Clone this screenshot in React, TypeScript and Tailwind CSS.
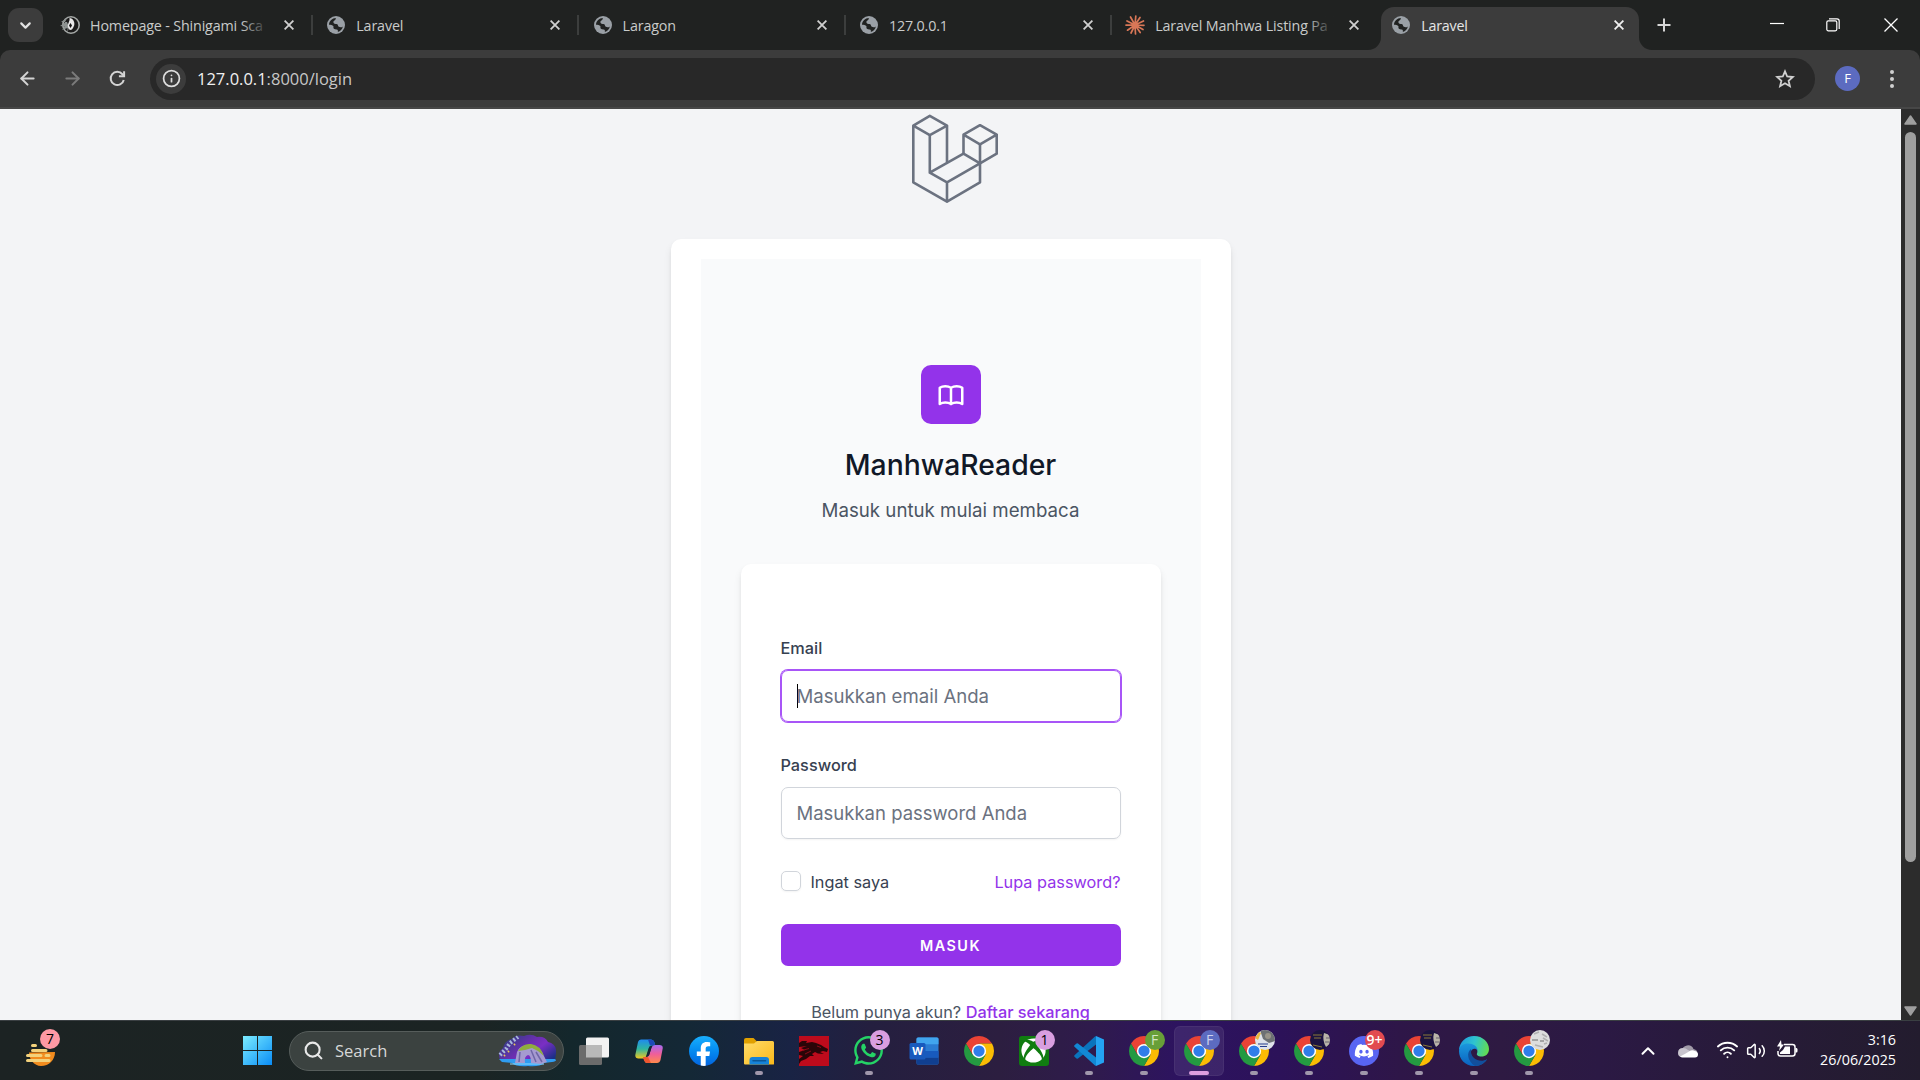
import type { ReactNode } from "react";
import { FaWhatsapp, FaXbox, FaDiscord, FaFacebookF } from "react-icons/fa";
import { ArrowLeft, ArrowRight, Info, Search, Volume2, Wifi, ChevronUp, ChevronDown } from "lucide-react";

const globe = (
  <svg viewBox="0 0 20 20" className="size-[18px] shrink-0">
    <circle cx="10" cy="10" r="10" fill="#9aa0a6" />
    <path d="M9.8 2.2 C9.8 4 9 4.7 7.9 5.3 C6.8 5.9 6.9 7.4 7.8 8.3 C8.6 9.1 10.4 8.4 11.4 9.2 C12.4 10 12 11.3 13.2 12 C14.6 12.8 16.3 12.7 17.6 11.6 C17 14.6 14.8 16.9 12 17.7 C12.3 16.5 12.2 15.6 11.2 15.1 C9.9 14.6 8.2 15 7.4 13.8 C6.8 12.8 7.5 11.9 7 11 C6.2 9.8 4 9.9 2.2 9.6 C2.5 5.5 5.8 2.3 9.8 2.2Z" fill="#202221" />
  </svg>
);

const shinigami = (
  <svg viewBox="0 0 20 20" className="size-[20px] shrink-0">
    <circle cx="11" cy="10" r="8.2" fill="#1b1b1b" stroke="#a5a9a7" strokeWidth="1.6" />
    <path d="M1 7L7 3L4.500 8L0 11L4.500 11.500L2 15L7.500 13L7.500 18L9 12L7 7Z" fill="#8d9391" />
    <path d="M9.500 3C13 3 16 8 13.500 12C12 16 9 16 8 12C7 9 10 7 9.500 3Z" fill="#e8e8e8" />
    <path d="M10.500 8L12 10.500L10.500 13L9 10.500Z" fill="#111" />
  </svg>
);

const spark = (
  <svg viewBox="-10 -10 20 20" className="size-[20px] shrink-0" stroke="#d97757" strokeWidth="1.7" strokeLinecap="round">
    <path d="M0 0L0.800 -9M0 0L5 -7.500M0 0L8.500 -4M0 0L9 0.300M0 0L8 4.500M0 0L5.200 7.600M0 0L0.500 9M0 0L-4 8M0 0L-7.500 5.200M0 0L-9 0.200M0 0L-8 -4M0 0L-4.500 -8" />
  </svg>
);

function Close({ active = false }: { active?: boolean }) {
  return (
    <svg viewBox="0 0 10 10" className="size-[10px] shrink-0" stroke={active ? "#f1f1f1" : "#d0d0d0"} strokeWidth="1.8">
      <path d="M0.600 0.600L9.400 9.400M9.400 0.600L0.600 9.400" />
    </svg>
  );
}

function TabTitle({ title, fade = false }: { title: string; fade?: boolean }) {
  return (
    <div className="relative mt-px ml-[10px] w-[179px] text-[14.3px] tracking-[-0.15px] whitespace-nowrap text-[#c9cbca]">
      {title}
      {fade && <div className="absolute inset-y-0 right-0 w-[28px] bg-linear-to-r from-transparent to-[#202221]" />}
    </div>
  );
}

function Tab({ icon, title, fade = false }: { icon: ReactNode; title: string; fade?: boolean }) {
  return (
    <div className="flex h-full w-[266.3px] shrink-0 items-center">
      <div className="flex w-[20px] justify-center">{icon}</div>
      <TabTitle title={title} fade={fade} />
      <div className="ml-[15px] flex"><Close /></div>
      <div className="ml-[17px] h-[20px] w-[2px] bg-[#3c3e3d]" />
    </div>
  );
}

function TabStrip() {
  return (
    <div className="flex h-[50px] items-center bg-[#202221]">
      <div className="ml-[8px] flex h-[34px] w-[35px] items-center justify-center rounded-[11px] bg-[#3c3c3c]">
        <ChevronDown className="size-[17px] text-[#e3e3e3]" strokeWidth={3} />
      </div>
      <div className="ml-[17px] flex h-full">
        <Tab icon={shinigami} title="Homepage - Shinigami Sca" fade />
        <Tab icon={globe} title="Laravel" />
        <Tab icon={globe} title="Laragon" />
        <Tab icon={globe} title="127.0.0.1" />
        <div className="flex h-full w-[254px] shrink-0 items-center">
          <div className="flex w-[20px] justify-center">{spark}</div>
          <TabTitle title="Laravel Manhwa Listing Pa" fade />
          <div className="ml-[15px] flex"><Close /></div>
        </div>
      </div>
      <div className="relative ml-[2px] mt-[7px] flex h-[43px] w-[258px] items-center rounded-t-[13px] bg-[#3c3c3c]">
        <svg viewBox="0 0 13 13" className="absolute bottom-0 -left-[13px] size-[13px]"><path d="M13 0V13H0A13 13 0 0 0 13 0Z" fill="#3c3c3c" /></svg>
        <svg viewBox="0 0 13 13" className="absolute bottom-0 -right-[13px] size-[13px]"><path d="M0 0V13H13A13 13 0 0 1 0 0Z" fill="#3c3c3c" /></svg>
        <div className="mb-[7px] ml-[11px] flex">{globe}</div>
        <div className="mb-[6px] ml-[11px] w-[193px] text-[14.3px] tracking-[-0.2px] text-[#e6e6e6]">Laravel</div>
        <div className="mb-[7px] flex"><Close active /></div>
      </div>
      <svg viewBox="0 0 14 14" className="ml-[18px] size-[14px]" stroke="#d6d6d6" strokeWidth="2"><path d="M7 0.500V13.500M0.500 7H13.500" /></svg>
      <svg viewBox="0 0 14 14" className="ml-[99px] size-[14px]" stroke="#fff" strokeWidth="1.2"><path d="M0 5.500H14" /></svg>
      <svg viewBox="0 0 14 14" className="ml-[42px] size-[14px]" stroke="#fff" strokeWidth="1.2" fill="none">
        <rect x="0.800" y="2.800" width="10" height="10" rx="1.500" />
        <path d="M3 0.800H11Q13.200 0.800 13.200 3V11" />
      </svg>
      <svg viewBox="0 0 14 14" className="ml-[44px] size-[14px]" stroke="#fff" strokeWidth="1.3"><path d="M0.500 0.500L13.500 13.500M13.500 0.500L0.500 13.500" /></svg>
    </div>
  );
}

function Toolbar() {
  return (
    <div className="bg-[#202221]">
      <div className="flex h-[59px] items-center rounded-t-[10px] border-b-2 border-[#474747] bg-[#3c3c3c]">
        <ArrowLeft className="ml-[17px] size-[21px] text-[#d4d4d4]" strokeWidth={2.3} />
        <ArrowRight className="ml-[24px] size-[21px] text-[#7b7b7b]" strokeWidth={2.3} />
        <svg viewBox="0 0 18 18" className="ml-[26px] size-[17px]" fill="none" stroke="#d4d4d4" strokeWidth="2.1">
          <path d="M15.600 10.500A7 7 0 1 1 14.200 4.500L15.800 6.200" />
          <path d="M16 1.200V6.700H10.500" />
        </svg>
        <div className="ml-[24px] flex h-[42px] w-[1665px] items-center rounded-full bg-[#282828]">
          <div className="ml-[6px] flex size-[30px] items-center justify-center rounded-full bg-[#3c3c3c]">
            <Info className="size-[19px] text-[#dedede]" strokeWidth={2.2} />
          </div>
          <div className="mt-[2px] ml-[11px] text-[16.5px] text-[#c7c7c7]"><span className="text-[#f0f0f0]">127.0.0.1</span>:8000/login</div>
          <svg viewBox="0 0 20 20" className="mr-[20px] ml-auto size-[20px]" fill="none" stroke="#d0d0d0" strokeWidth="1.8">
            <path d="M10 2.300L12.200 7.500L17.800 8L13.600 11.700L14.900 17.200L10 14.300L5.100 17.200L6.400 11.700L2.200 8L7.800 7.500Z" />
          </svg>
        </div>
        <div className="ml-[20px] flex size-[25px] items-center justify-center rounded-full bg-[#5c6bc0] text-[13px] text-white">F</div>
        <div className="ml-[30px] flex flex-col gap-[3px]">
          <div className="size-[4px] rounded-full bg-[#d0d0d0]" />
          <div className="size-[4px] rounded-full bg-[#d0d0d0]" />
          <div className="size-[4px] rounded-full bg-[#d0d0d0]" />
        </div>
      </div>
    </div>
  );
}

function LoginPage() {
  return (
    <div className="flex h-full flex-1 flex-col items-center overflow-hidden bg-[#f3f4f6] font-['Inter',sans-serif]">
      <svg viewBox="901 109 100 100" className="size-[100px] shrink-0" fill="none" stroke="#6b7280" strokeWidth="2.6" strokeLinejoin="round">
        <path d="M929.800 115.900L947 125.700L929.800 135.200L913.300 125.700Z" />
        <path d="M913.300 125.700V182.300L947 201.700L980 182.300V144.300" />
        <path d="M929.800 135.200V172.700L947 182.300V201.700M947 125.700V162.700M929.800 172.700L963.500 153.700L980 163.300L947 182.300" />
        <path d="M980 125.200L996.700 134.700L980 144.300L963.500 134.700ZM963.500 134.700V153.700M996.700 134.700V153.700L980 163.300" />
      </svg>
      <div className="mt-[30px] w-[560px] shrink-0 rounded-[10px] bg-white px-[30px] pt-[20px] shadow-[0_5px_8px_-1px_rgba(0,0,0,0.1),0_2px_5px_-2px_rgba(0,0,0,0.1)]">
        <div className="flex h-[900px] flex-col items-center bg-[#f9fafb] px-[40px] pt-[106px]">
          <div className="flex size-[60px] items-center justify-center rounded-[10px] bg-[#9333ea]">
            <svg viewBox="0 0 24 24" className="size-[30px]" fill="none" stroke="#fff" strokeWidth="2" strokeLinecap="round" strokeLinejoin="round">
              <path d="M12 6.253v13m0-13C10.832 5.477 9.246 5 7.500 5S4.168 5.477 3 6.253v13C4.168 18.477 5.754 18 7.500 18s3.332.477 4.500 1.253m0-13C13.168 5.477 14.754 5 16.500 5c1.747 0 3.332.477 4.500 1.253v13C19.832 18.477 18.247 18 16.500 18c-1.746 0-3.332.477-4.500 1.253" />
            </svg>
          </div>
          <h1 className="mt-[21px] text-[28.3px] leading-[40px] font-medium text-[#111827]">ManhwaReader</h1>
          <p className="mt-[11px] text-[18.700px] leading-[30px] text-[#4b5563]">Masuk untuk mulai membaca</p>
          <div className="mt-[38px] h-[600px] w-[420px] rounded-[10px] bg-white px-[40px] pt-[72px] shadow-[0_5px_8px_-1px_rgba(0,0,0,0.1),0_2px_5px_-2px_rgba(0,0,0,0.1)]">
            <div className="text-[16.3px] leading-[25px] font-medium text-[#374151]">Email</div>
            <div className="mt-[9px] flex h-[52px] items-center rounded-[7px] border border-[#a855f7] px-[15px] text-[18.600px] text-[#6b7280] ring-1 ring-[#a855f7]">
              <div className="h-[24px] w-px bg-black" />
              <span className="mt-[2px] -ml-px">Masukkan email Anda</span>
            </div>
            <div className="mt-[31px] text-[16.3px] leading-[25px] font-medium text-[#374151]">Password</div>
            <div className="mt-[9px] flex h-[52px] items-center rounded-[7px] border border-[#d1d5db] px-[15px] text-[18.500px] text-[#6b7280] shadow-xs">
              <span className="mt-px">Masukkan password Anda</span>
            </div>
            <div className="mt-[30px] flex h-[25px] items-center text-[16.300px]">
              <div className="mb-[2px] size-[20px] rounded-[5px] border border-[#d1d5db] shadow-xs" />
              <span className="mt-px ml-[10px] text-[#374151]">Ingat saya</span>
              <span className="mt-px ml-auto text-[#9333ea]">Lupa password?</span>
            </div>
            <div className="mt-[30px] flex h-[42px] items-center justify-center rounded-[7px] bg-[#9333ea] text-[14.400px] font-semibold tracking-[1.500px] text-white">MASUK</div>
            <div className="mt-[34px] text-center text-[16.300px] leading-[25px] text-[#4b5563]">
              Belum punya akun? <span className="font-medium text-[#9333ea]">Daftar sekarang</span>
            </div>
          </div>
        </div>
      </div>
    </div>
  );
}

function ScrollBar() {
  return (
    <div className="flex w-[19px] flex-col items-center bg-[#2c2c2c]">
      <svg viewBox="0 0 13 10" className="mt-[6px] h-[10px] w-[13px]"><path d="M6.500 1L12 9H1Z" fill="#9f9f9f" stroke="#9f9f9f" strokeLinejoin="round" strokeWidth="1.5" /></svg>
      <div className="mt-[7px] h-[730px] w-[11px] rounded-full bg-[#9f9f9f]" />
      <svg viewBox="0 0 13 10" className="mt-auto mb-[4px] h-[10px] w-[13px]"><path d="M6.500 9L12 1H1Z" fill="#9f9f9f" stroke="#9f9f9f" strokeLinejoin="round" strokeWidth="1.500" /></svg>
    </div>
  );
}

const chrome = (
  <svg viewBox="0 0 24 24" className="size-[30px]">
    <path d="M1.608 6A12 12 0 0 1 22.392 6H12L6.804 15Z" fill="#ea4335" />
    <path d="M22.392 6A12 12 0 0 1 12 24L17.196 15L12 6Z" fill="#fbbc04" />
    <path d="M12 24A12 12 0 0 1 1.608 6L6.804 15H17.196Z" fill="#249a41" />
    <circle cx="12" cy="12" r="5.700" fill="#fff" />
    <circle cx="12" cy="12" r="4.500" fill="#2f7de9" />
  </svg>
);

const taskView = (
  <svg viewBox="0 0 30 28" className="h-[28px] w-[30px]">
    <rect x="7" y="0.500" width="23" height="20" rx="1.500" fill="#f2f2f2" />
    <rect x="0" y="8" width="23" height="20" rx="1.500" fill="#6b6b6b" />
    <rect x="7" y="8" width="16" height="12.500" fill="#b9b9b9" />
  </svg>
);

const copilot = (
  <svg viewBox="0 0 28 26" className="h-[26px] w-[28px]">
    <defs>
      <linearGradient id="cpLeft" x1="0" y1="0" x2="0" y2="1"><stop offset="0" stopColor="#1f8af0" /><stop offset="0.500" stopColor="#2fb6a0" /><stop offset="1" stopColor="#f2c81e" /></linearGradient>
      <linearGradient id="cpRight" x1="0" y1="0" x2="0" y2="1"><stop offset="0" stopColor="#a56bf0" /><stop offset="0.500" stopColor="#ef5e9a" /><stop offset="1" stopColor="#ff8a4c" /></linearGradient>
    </defs>
    <path d="M6 1.500H16Q18.500 1.500 19.300 4L20.300 7.500H17Q14.500 7.500 13.700 10L11 18.500Q10.200 20.500 8 20.500H3.500Q-0.500 20.500 0.500 16L3 4Q3.700 1.500 6 1.500Z" fill="url(#cpLeft)" />
    <path d="M16 1.500Q18.500 1.500 19.300 4L20.300 7.500H15L13 1.500Z" fill="#1b49b8" />
    <path d="M22 25H12.500Q10 25 9.200 22.500L8 19H11Q13.500 19 14.300 16.500L16.500 9.500Q17.300 7 20 7H24.500Q28.500 7 27.600 11L25.500 22Q24.700 25 22 25Z" fill="url(#cpRight)" />
    <path d="M12.500 25Q10 25 9.200 22.500L8 19H13L16 25Z" fill="#f0562f" />
    <path d="M14.500 8.500L17 8L14 17.500L11.500 18.500Z" fill="#142836" />
  </svg>
);

const facebook = (
  <div className="flex size-[30px] items-end justify-center overflow-hidden rounded-full bg-linear-to-b from-[#19affe] to-[#0664e0]">
    <FaFacebookF className="-mb-px size-[25px] text-white" />
  </div>
);

const explorer = (
  <svg viewBox="0 0 30 27" className="mt-px h-[27px] w-[30px]">
    <defs><linearGradient id="folder" x1="0" y1="0" x2="1" y2="1"><stop offset="0" stopColor="#ffdc6a" /><stop offset="1" stopColor="#fbb91a" /></linearGradient></defs>
    <path d="M0 2Q0 0 2 0H9.500L13 3.500V8H0Z" fill="#e0a000" />
    <path d="M0 5.500H10L13 3H28.500Q30 3 30 4.500V26Q30 26.500 29 26.500H1Q0 26.500 0 25.500Z" fill="url(#folder)" />
    <path d="M5.500 26.500V22Q5.500 19 8.500 19H22Q25 19 25 22V26.500Z" fill="#1683d8" />
    <path d="M9 22.700H21.500" stroke="#0b5797" strokeWidth="1.500" strokeLinecap="round" />
  </svg>
);

const dragon = (
  <svg viewBox="0 0 30 30" className="size-[30px]">
    <rect width="30" height="30" fill="#bd0b1c" />
    <path d="M0 7L3 5L8 5L7 7L13 6L17 7L22 9L25 11L29 13L28 16L24 15L21 16L25 18L19 17.500L16 16L13 18L15 20L11 20L7 23L2 25L0 28V23L4 20L0 19V16L6 14L2 12L8 10L0 11Z" fill="#2a0508" />
    <path d="M3 14.500L10 12.500M6 18L12 15M18 10L22 11.500" stroke="#8d0a18" />
  </svg>
);

const whatsapp = <FaWhatsapp className="size-[33px] text-[#25d366]" />;

const word = (
  <svg viewBox="0 0 30 28" className="h-[28px] w-[30px]">
    <rect x="7.500" y="0.500" width="22" height="27" rx="1.500" fill="#2b7cd3" />
    <path d="M7.500 7.300V2Q7.500 0.500 9 0.500H28Q29.500 0.500 29.500 2V7.300Z" fill="#41a5ee" />
    <path d="M7.500 14H29.500V20.800H7.500Z" fill="#185abd" />
    <path d="M7.500 20.800H29.500V26Q29.500 27.500 28 27.500H9Q7.500 27.500 7.500 26Z" fill="#103f91" />
    <rect x="0.500" y="6" width="16" height="16.500" rx="1.500" fill="#185abd" />
    <text x="8.500" y="18.300" textAnchor="middle" fontFamily="Open Sans" fontWeight="700" fontSize="11" fill="#fff">W</text>
  </svg>
);

const xbox = (
  <div className="flex size-[30px] items-center justify-center rounded-[3px] bg-[#107c10]">
    <FaXbox className="size-[25px] text-white" />
  </div>
);

const vscode = (
  <svg viewBox="0 0 30 30" className="size-[30px]">
    <path d="M22 0L30 3.500V26.500L22 30Z" fill="#24a3f2" />
    <path d="M22 0L22 8.500L4 22.500Q3.200 23 2.500 22.400L0.500 20.700Q-0.200 20 0.500 19.200L20.700 0.700Z" fill="#0a74bd" />
    <path d="M22 30V21.500L4 7.500Q3.200 7 2.500 7.600L0.500 9.300Q-0.200 10 0.500 10.800L20.700 29.300Z" fill="#1288d4" />
  </svg>
);

const discord = (
  <div className="flex size-[30px] items-center justify-center rounded-full bg-[#5865f2]">
    <FaDiscord className="size-[20px] text-white" />
  </div>
);

const edge = (
  <svg viewBox="0 0 30 30" className="size-[30px]">
    <defs>
      <linearGradient id="edgeTop" x1="0" y1="0.300" x2="1" y2="0.500"><stop offset="0" stopColor="#1f9be0" /><stop offset="0.500" stopColor="#2fc4cf" /><stop offset="1" stopColor="#62dc52" /></linearGradient>
      <linearGradient id="edgeLow" x1="0" y1="0" x2="0" y2="1"><stop offset="0" stopColor="#1b98dd" /><stop offset="1" stopColor="#0a62c0" /></linearGradient>
    </defs>
    <path d="M0 14C0.500 6 7 0 15 0C24 0 30 6.500 30 13C30 18 26.500 20.500 22.500 20.500C19 20.500 17.200 19 18 17.500C19.500 14 17 10.500 13 10.500C6 9.500 1.500 11.500 0 14Z" fill="url(#edgeTop)" />
    <path d="M0 15C0.500 9.500 4.500 7.500 9 7.500C14.500 7.500 18.500 10.500 18.700 14.500C17 12.300 13 12 12 15.500C11 21 16 26.500 23 25.500C25 25.200 26.500 24.500 28 23.200C25 28 20 30 15 30C6 30 0 23 0 15Z" fill="url(#edgeLow)" />
    <path d="M12 13C7.500 16 8 25 16 29.900C21 29.800 25.500 27.500 28 23.200C21 27 12.500 23 12 16Z" fill="#124f9c" />
  </svg>
);

const photoGray = (
  <svg viewBox="0 0 20 20" className="size-[20px] rounded-full">
    <rect width="20" height="20" fill="#dfe3ea" />
    <path d="M5 0H20V11L14 13L8 9Z" fill="#6d7174" />
    <circle cx="13" cy="6" r="3" fill="#99958a" />
    <path d="M0 8L4 2L6 3L3 10Z" fill="#e8b93e" />
    <path d="M3 14H13M5 16.500H12" stroke="#263c8c" strokeWidth="1.200" />
  </svg>
);
const photoNavy = (
  <svg viewBox="0 0 20 20" className="size-[20px] rounded-full">
    <rect width="20" height="20" fill="#1c1340" />
    <path d="M14 3L20 5V14L16 17Q12 10 14 3Z" fill="#b9b5a8" />
    <path d="M16 8H20M15 12H19" stroke="#6a6570" strokeWidth="1.200" />
    <path d="M3 5H12M4 8H11M3 15L12 17" stroke="#8a7838" strokeWidth="1" />
  </svg>
);
const photoWhite = (
  <svg viewBox="0 0 20 20" className="size-[20px] rounded-full">
    <rect width="20" height="20" fill="#dddddd" />
    <path d="M4 4L9 2M12 4L17 7M13 8L18 11M5 15L13 17M14 14L17 13" stroke="#b0b0b0" strokeWidth="1.500" />
    <path d="M2 10H8M10 11H14" stroke="#6c6c6c" strokeWidth="1.200" />
  </svg>
);

function Badge({ children, tone }: { children: ReactNode; tone: string }) {
  return <div className={"flex size-[20px] items-center justify-center rounded-full text-[14px] leading-none " + tone}>{children}</div>;
}

type TaskItem = { icon: ReactNode; badge?: ReactNode; open?: boolean; active?: boolean };

const tasks: TaskItem[] = [
  { icon: taskView },
  { icon: copilot },
  { icon: facebook },
  { icon: explorer, open: true },
  { icon: dragon },
  { icon: whatsapp, open: true, badge: <Badge tone="bg-[#d99ee0] text-black">3</Badge> },
  { icon: word },
  { icon: chrome },
  { icon: xbox, badge: <Badge tone="bg-[#d99ee0] text-black">1</Badge> },
  { icon: vscode, open: true },
  { icon: chrome, open: true, badge: <Badge tone="bg-[#689f38] text-[13px] text-[#d5e5c5]">F</Badge> },
  { icon: chrome, open: true, active: true, badge: <Badge tone="bg-[#5c6bc0] text-[13px] text-[#ced3ee]">F</Badge> },
  { icon: chrome, open: true, badge: photoGray },
  { icon: chrome, open: true, badge: photoNavy },
  { icon: discord, open: true, badge: <Badge tone="bg-[#e24a50] text-[12px] font-semibold text-white">9+</Badge> },
  { icon: chrome, open: true, badge: photoNavy },
  { icon: edge, open: true },
  { icon: chrome, open: true, badge: photoWhite },
];

function TaskButton({ icon, badge, open, active }: TaskItem) {
  return (
    <div className="flex h-full w-[55px] shrink-0 items-center justify-center">
      <div className={"relative flex h-[50px] w-[50px] items-center justify-center rounded-[6px] " + (active ? "bg-white/8 ring-1 ring-white/5 ring-inset" : "")}>
        {icon}
        {badge && <div className="absolute top-[4px] right-[4px]">{badge}</div>}
        {open && <div className={"absolute bottom-px left-1/2 h-[4px] -translate-x-1/2 rounded-full " + (active ? "w-[20px] bg-[#dd9fe0]" : "w-[8px] bg-[#a097ab]")} />}
      </div>
    </div>
  );
}

function Taskbar() {
  return (
    <div className="flex h-[60px] items-center border-t border-[#3a3f42] bg-[linear-gradient(90deg,#1c2323_0px,#1b2423_480px,#14272c_570px,#142836_690px,#192344_790px,#241f3f_870px,#2c1e40_1000px,#2f1b4c_1090px,#2d1360_1180px,#2c1259_1280px,#2e1648_1400px,#2e1a42_1500px,#2b1944_1600px,#271b38_1760px,#231c2e_1920px)]">
      <div className="relative ml-[26px] h-[36px] w-[34px]">
        <svg viewBox="0 0 34 36" className="-mt-px h-[36px] w-[34px]">
          <path d="M3 20.500C3 27 8 34 15 34C23 34 29 28 29 20Z" fill="#f28c1e" />
          <path d="M6.500 13.500H9.500M6.500 18.500H20M1.500 23.500H15M1.500 28.500H23M20 23.500H23" stroke="#f3d27c" strokeWidth="3" strokeLinecap="round" />
        </svg>
        <div className="absolute -top-[4px] left-[14px]"><Badge tone="bg-[#ff99a4] text-black">7</Badge></div>
      </div>
      <svg viewBox="0 0 29 29" className="ml-[183px] size-[29px]">
        <defs><linearGradient id="win" gradientUnits="userSpaceOnUse" x1="0" y1="0" x2="29" y2="29"><stop offset="0" stopColor="#7cecff" /><stop offset="0.500" stopColor="#42bdfb" /><stop offset="1" stopColor="#0a8cf5" /></linearGradient></defs>
        <path d="M0 0H14V14H0ZM15 0H29V14H15ZM0 15H14V29H0ZM15 15H29V29H15Z" fill="url(#win)" />
      </svg>
      <div className="ml-[17px] flex h-[40px] w-[275px] items-center rounded-full border border-[#565d5b] bg-[#3b4240]">
        <Search className="ml-[13px] size-[21px] text-[#e8e8e8]" strokeWidth={2.4} />
        <span className="mt-px ml-[11px] text-[16.500px] text-[#d6d8d7]">Search</span>
        <svg viewBox="0 0 58 33" className="mr-[7px] ml-auto h-[33px] w-[58px]">
          <defs>
            <linearGradient id="sky" x1="0" y1="0.200" x2="1" y2="0.800"><stop offset="0" stopColor="#2b3f7d" /><stop offset="0.450" stopColor="#6a2fb0" /><stop offset="0.650" stopColor="#7a2fc4" /><stop offset="1" stopColor="#1b2f86" /></linearGradient>
          </defs>
          <path d="M2 26Q-1 18 5 14Q7 6 14 5Q18 0 26 2Q33 -1 39 3Q47 2 50 8Q59 10 58 19L57 27Z" fill="url(#sky)" />
          <path d="M2 21L8 15L12 9L20 3" stroke="#a9b8dc" strokeWidth="4" strokeDasharray="2 2" fill="none" />
          <path d="M10 18L11 17M16 11L17 10M6 22L7 21" stroke="#e9c65a" strokeWidth="2" />
          <path d="M1 25H57Q60 27 54 28L46 29Q42 33 30 32Q18 33 14 29L4 28Z" fill="#2f9cf0" />
          <path d="M12 30H46" stroke="#8fdcff" strokeWidth="1.200" />
          <path d="M17 29L19 18Q22 11 30 11Q40 11 44 18L49 28L43 30L33 29Q33 21 30 21Q26 22 27 29Z" fill="#a59ad0" />
          <path d="M38 18L44 28M22 18L21 28M33 16L38 28" stroke="#6f66a6" strokeWidth="1.500" />
          <path d="M20 17Q25 9 33 10Q42 11 46 22L40 17L34 14L27 16Z" fill="#8fae3d" />
        </svg>
      </div>
      <div className="ml-[2px] flex h-full">
        {tasks.map((t, i) => <TaskButton key={i} {...t} />)}
      </div>
      <ChevronUp className="ml-[81px] size-[22px] text-white" strokeWidth={2.2} />
      <svg viewBox="0 0 20 14" className="ml-[19px] h-[14px] w-[20px]">
        <path d="M4 7A6 6 0 0 1 15.500 5Q20 6 19.500 10L10 9Z" fill="#a19ba8" />
        <path d="M0 9Q0 4 5 4Q8 4 10 6L18 10L10 13H4Q0 13 0 9Z" fill="#c9c5ce" />
        <path d="M2 12.500Q8 9.500 11 7.500Q14 5.500 17 7Q20 8 20 10.500Q20 13.500 17 13.500H4.500Q3 13.500 2 12.500Z" fill="#fff" />
      </svg>
      <Wifi className="mb-[2px] ml-[18px] size-[23px] text-white" strokeWidth={2} />
      <Volume2 className="ml-[7px] size-[20px] text-white" strokeWidth={1.8} />
      <svg viewBox="0 0 21 18" className="mb-[3px] ml-[11px] h-[18px] w-[21px]">
        <path d="M7 4.500H15.500Q18 4.500 18 7V13.500Q18 16 15.500 16H3.500Q1 16 1 13.500V11" fill="none" stroke="#fff" strokeWidth="1.500" />
        <path d="M8 6.500H13V14H3V12.500L6 10Z" fill="#fff" />
        <path d="M18.500 8H19.500Q20.500 8 20.500 9.500V11Q20.500 12.500 19.500 12.500H18.500Z" fill="#fff" />
        <path d="M4 0L0 6.500H3L2 11L7 4.500H4.500Z" fill="#fff" />
      </svg>
      <div className="mr-[24px] ml-auto text-right text-[14.300px] leading-[20px] text-white">
        <div className="-mt-px">3:16</div>
        <div>26/06/2025</div>
      </div>
    </div>
  );
}

export default function App() {
  return (
    <div className="flex h-[1080px] w-[1920px] flex-col overflow-hidden font-['Open_Sans',sans-serif]">
      <TabStrip />
      <Toolbar />
      <div className="flex h-[911px] shrink-0">
        <LoginPage />
        <ScrollBar />
      </div>
      <Taskbar />
    </div>
  );
}
